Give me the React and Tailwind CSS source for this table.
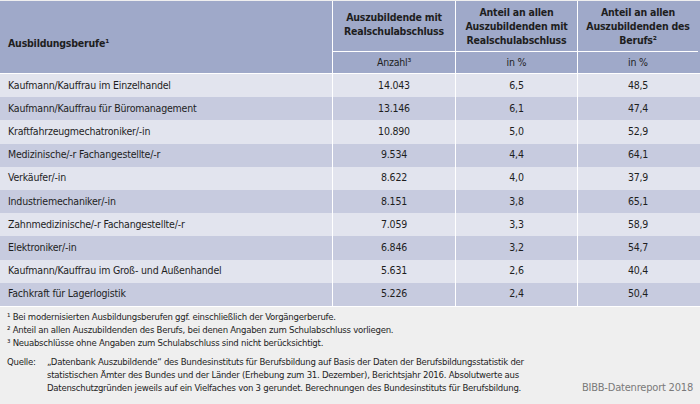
import React from 'react';

const rows = [
    ['Kaufmann/Kauffrau im Einzelhandel', '14.043', '6,5', '48,5'],
    ['Kaufmann/Kauffrau für Büromanagement', '13.146', '6,1', '47,4'],
    ['Kraftfahrzeugmechatroniker/-in', '10.890', '5,0', '52,9'],
    ['Medizinische/-r Fachangestellte/-r', '9.534', '4,4', '64,1'],
    ['Verkäufer/-in', '8.622', '4,0', '37,9'],
    ['Industriemechaniker/-in', '8.151', '3,8', '65,1'],
    ['Zahnmedizinische/-r Fachangestellte/-r', '7.059', '3,3', '58,9'],
    ['Elektroniker/-in', '6.846', '3,2', '54,7'],
    ['Kaufmann/Kauffrau im Groß- und Außenhandel', '5.631', '2,6', '40,4'],
    ['Fachkraft für Lagerlogistik', '5.226', '2,4', '50,4'],
];

const font = { fontFamily: '"Liberation Sans Narrow", "DejaVu Sans Condensed", "Liberation Sans", sans-serif' };

export default function App() {
    return (
        <div className="w-[700px] h-[404px] bg-[#efefef] text-[#1e1e1e] overflow-hidden" style={font}>
            {/* header */}
            <div className="mt-px flex h-[73px] bg-[#9fa9c9] border-b border-white text-[10.5px] tracking-[-0.2px] font-bold">
                <div className="w-[333px] border-r border-white pl-2 pt-[35px]">Ausbildungsberufe¹</div>
                <div className="w-[123px] flex flex-col border-r border-white">
                    <div className="h-[51px] border-b border-white flex items-center justify-center text-center leading-[14px] pb-1">
                        Auszubildende mit<br />Realschulabschluss
                    </div>
                    <div className="flex-1 flex items-center justify-center font-normal">Anzahl³</div>
                </div>
                <div className="w-[122px] flex flex-col border-r border-white">
                    <div className="h-[51px] border-b border-white flex items-center justify-center text-center leading-[14px]">
                        Anteil an allen<br />Auszubildenden mit<br />Realschulabschluss
                    </div>
                    <div className="flex-1 flex items-center justify-center font-normal">in %</div>
                </div>
                <div className="w-[120px] flex flex-col">
                    <div className="h-[51px] border-b border-white flex items-center justify-center text-center leading-[14px]">
                        Anteil an allen<br />Auszubildenden des<br />Berufs²
                    </div>
                    <div className="flex-1 flex items-center justify-center font-normal">in %</div>
                </div>
            </div>

            {/* body */}
            {rows.map((r, i) => (
                <div
                    key={r[0]}
                    className={`flex h-[23.2px] text-[10.5px] tracking-[-0.2px] ${i % 2 === 0 ? 'bg-[#e2e4ee]' : 'bg-[#c7cbdf]'}`}
                >
                    <div className="w-[333px] border-r border-white pl-2 flex items-center">{r[0]}</div>
                    <div className="w-[123px] border-r border-white flex items-center justify-center">{r[1]}</div>
                    <div className="w-[122px] border-r border-white flex items-center justify-center">{r[2]}</div>
                    <div className="w-[120px] flex items-center justify-center">{r[3]}</div>
                </div>
            ))}

            {/* notes */}
            <div className="border-t border-white px-[7px] pt-[3px] text-[9.5px] tracking-[-0.25px] leading-[13px]">
                <p>¹ Bei modernisierten Ausbildungsberufen ggf. einschließlich der Vorgängerberufe.</p>
                <p>² Anteil an allen Auszubildenden des Berufs, bei denen Angaben zum Schulabschluss vorliegen.</p>
                <p>³ Neuabschlüsse ohne Angaben zum Schulabschluss sind nicht berücksichtigt.</p>
                <div className="mt-[6px] flex items-end">
                    <span className="w-[40px] shrink-0 self-start">Quelle:</span>
                    <p className="whitespace-nowrap">
                        „Datenbank Auszubildende“ des Bundesinstituts für Berufsbildung auf Basis der Daten der Berufsbildungsstatistik der<br />
                        statistischen Ämter des Bundes und der Länder (Erhebung zum 31. Dezember), Berichtsjahr 2016. Absolutwerte aus<br />
                        Datenschutzgründen jeweils auf ein Vielfaches von 3 gerundet. Berechnungen des Bundesinstituts für Berufsbildung.
                    </p>
                    <span className="ml-auto pr-[-2px] text-[#7a7a7a] text-[11px] tracking-[-0.2px]">BIBB-Datenreport 2018</span>
                </div>
            </div>
        </div>
    );
}
